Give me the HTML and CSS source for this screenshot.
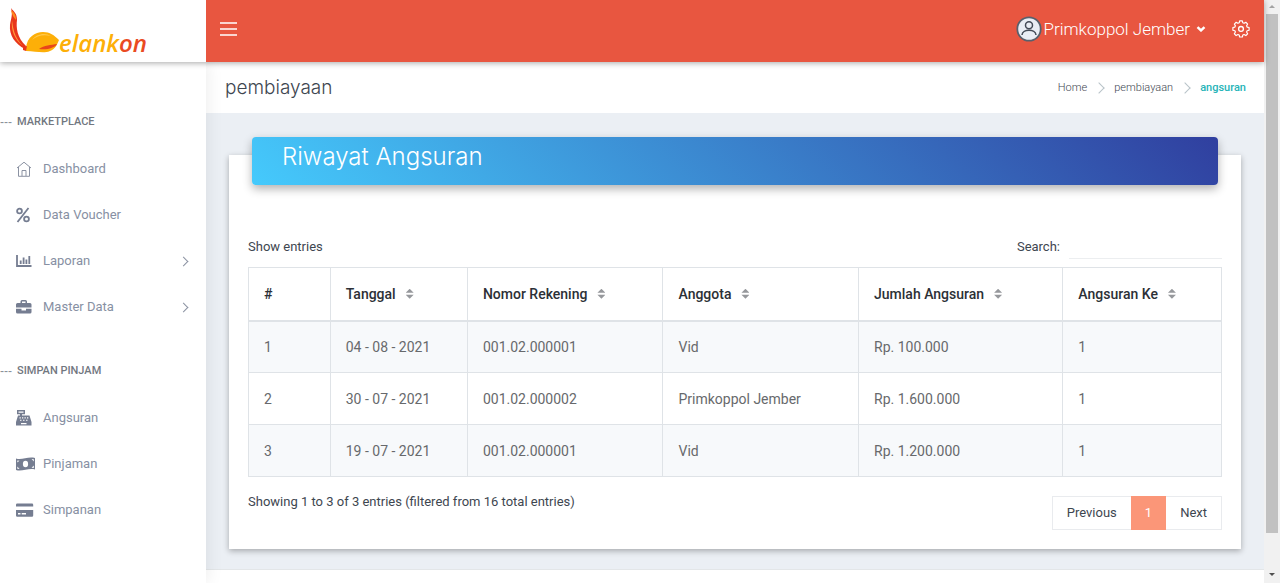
FILE: index.html
```html
<!DOCTYPE html>
<html lang="id">
  <head>
    <meta charset="utf-8" />
    <meta name="viewport" content="width=device-width, initial-scale=1" />
    <title>Belankon - Riwayat Angsuran</title>
    <link rel="stylesheet" href="styles.css" />
  </head>

  <body>
    <div class="page">
      <header class="topbar">
        <a class="brand" href="#" aria-label="Belankon">
          <svg class="brand-mark" width="50" height="47" viewBox="0 0 50 47">
            <path d="M2 0 C5 4 8 5 8 12 C7 19 8 30 17 38 L16 41 C6 36 0 27 1 17 C2 10 4 7 2 0Z" fill="#e8361b" />
            <path d="M2 2 C6 5 7 8 7 12 C5 10 3 7 2 2Z" fill="#ff8a1c" />
            <path d="M3 12 C4 20 5 29 14 38 C5 31 2 22 3 12Z" fill="#ff9c3c" />
            <path d="M17 40 C18 29 26 24 34 24 C41 24 45 27 50 32 C48 37 46 41 41 43 C34 46 27 43 17 43Z" fill="#fdaf08" />
            <path d="M23 32 C27 26 36 24 42 28 C34 26 28 28 23 32Z" fill="#ffc94d" />
            <path d="M30 41 C35 37 42 37 48 36 C46 40 38 42 30 41Z" fill="#e8461b" />
            <path d="M14 39 L18 38 L17 43 L14 42Z" fill="#e8361b" />
          </svg>
          <span class="brand-text">elank<span>on</span></span>
        </a>
        <div class="topbar-nav">
          <button class="icon-btn" aria-label="Menu">
            <svg width="17" height="14" viewBox="0 0 17 14"><path d="M0 1h17M0 7h17M0 13h17" /></svg>
          </button>
          <button class="user-btn">
            <svg width="26" height="26" viewBox="0 0 26 26">
              <circle cx="13" cy="13" r="11.7" fill="#e9edf5" stroke="#59606c" stroke-width="1.8" />
              <circle cx="13" cy="9.3" r="3.5" fill="none" stroke="#444b58" stroke-width="1.5" />
              <path d="M6 19 C6.500 12.800 19.500 12.800 20 19" fill="none" stroke="#444b58" stroke-width="1.5" />
            </svg>
            <span>Primkoppol Jember</span>
            <svg class="caret" width="10" height="6" viewBox="0 0 10 6"><path d="M1.500 1.200 L5 4.400 L8.500 1.200" /></svg>
          </button>
          <button class="icon-btn" aria-label="Settings">
            <svg width="18" height="18" viewBox="0 0 18 18">
              <path stroke-width="1.3" stroke-linejoin="round" d="M7.500 1h3l.5 2.200 1.400.6 2-1.200 2 2-1.200 2 .6 1.400 2.200.5v3l-2.200.5-.6 1.400 1.200 2-2 2-2-1.200-1.400.6-.5 2.200h-3L7 16.800l-1.400-.6-2 1.200-2-2 1.200-2L2.200 12 0 11.500v-3L2.200 8l.6-1.400-1.200-2 2-2 2 1.200L7 3.200Z" transform="translate(.9 -.1) scale(.9)" />
              <circle cx="9" cy="8.900" r="2.400" stroke-width="1.300" />
            </svg>
          </button>
        </div>
      </header>

      <div class="wrapper">
        <nav class="sidebar">
          <h3><span>---</span><b>MARKETPLACE</b></h3>
          <ul>
            <li><a href="#">
              <svg viewBox="0 0 20 16"><path class="line" d="M1 7 L8 1.200 L15 7 M2.500 6 V15.300 H13.500 V6 M6 15 V9.500 H10 V15" /></svg>
              <span>Dashboard</span>
            </a></li>
            <li><a href="#">
              <svg viewBox="0 0 20 16"><path class="bold" d="M12.500 1 L1.500 15" /><circle class="bold" cx="3.500" cy="4" r="2.400" /><circle class="bold" cx="10.500" cy="12" r="2.400" /></svg>
              <span>Data Voucher</span>
            </a></li>
            <li><a href="#">
              <svg viewBox="0 0 20 16"><path class="bold" d="M1 2 V13 H15.500" /><path class="bold" d="M4.700 7.500 V11 M7.600 4.500 V11 M10.400 6.500 V11 M13.300 3 V11" /></svg>
              <span>Laporan</span>
              <i class="arrow"></i>
            </a></li>
            <li><a href="#">
              <svg viewBox="0 0 20 16"><path d="M1.500 4 H4.500 V2.500 Q4.500 1 6 1 H9.500 Q11 1 11 2.500 V4 H14 Q15.500 4 15.500 5.500 V8.500 H0 V5.500 Q0 4 1.500 4Z M6 4 H9.500 V2.500 H6Z M0 9.700 H5.500 V11.500 H10 V9.700 H15.500 V13 Q15.500 14.500 14 14.500 H1.500 Q0 14.500 0 13Z" fill-rule="evenodd" /></svg>
              <span>Master Data</span>
              <i class="arrow"></i>
            </a></li>
          </ul>

          <h3><span>---</span><b>SIMPAN PINJAM</b></h3>
          <ul>
            <li><a href="#">
              <svg viewBox="0 0 20 16"><path d="M1 0H9V4.200H6V5.500H13.500L15.500 12V15.500H0V12L2 5.500H4V4.200H1Z M2.500 1.500V2.700H7.500V1.500Z M3.500 7.200V8.400H4.800V7.200Z M6 7.200V8.400H7.300V7.200Z M8.500 7.200V8.400H9.800V7.200Z M11 7.200V8.400H12.300V7.200Z M4 9.700V10.800H5.500V9.700Z M7 9.700V10.800H8.500V9.700Z M10 9.700V10.800H11.500V9.700Z M5 13V14.200H10.500V13Z" fill-rule="evenodd" /></svg>
              <span>Angsuran</span>
            </a></li>
            <li><a href="#">
              <svg viewBox="0 0 20 16"><path d="M0 2.500C6 4.500 12 0 19 2V13.500C13 11.500 6 16 0 14Z" /><ellipse cx="9.500" cy="8" rx="2.600" ry="3.300" fill="#fff" /><path fill="#fff" d="M1.300 4.500L3.500 4.700L1.300 6.500Z M1.300 10.500L3.600 13L1.300 12.800Z M15.600 3L17.800 3.200V5.500Z M17.800 9.500V12L15.600 11.700Z" /></svg>
              <span>Pinjaman</span>
            </a></li>
            <li><a href="#">
              <svg viewBox="0 0 20 16"><path d="M1.200 1.500H16Q17.200 1.500 17.200 2.700V4.500H0V2.700Q0 1.500 1.200 1.500Z M0 8H17.200V13.500Q17.200 14.700 16 14.700H1.200Q0 14.700 0 13.500Z M2 11V12.500H4.500V11Z M5.700 11V12.500H10V11Z" fill-rule="evenodd" /></svg>
              <span>Simpanan</span>
            </a></li>
          </ul>
        </nav>

        <div class="main">
          <div class="titlebar">
            <h1>pembiayaan</h1>
            <ol class="breadcrumb">
              <li><a href="#">Home</a></li>
              <li><a href="#">pembiayaan</a></li>
              <li class="active">angsuran</li>
            </ol>
          </div>

          <main class="content">
            <section class="card">
              <div class="card-header">
                <h2>Riwayat Angsuran</h2>
              </div>

              <div class="table-tools">
                <span>Show entries</span>
                <div class="search">
                  <label for="search">Search:</label>
                  <input type="search" id="search" />
                </div>
              </div>

              <table>
                <colgroup>
                  <col class="col-no" />
                  <col class="col-date" />
                  <col class="col-account" />
                  <col class="col-member" />
                  <col class="col-total" />
                  <col />
                </colgroup>
                <thead>
                  <tr>
                    <th>#</th>
                    <th class="sort">Tanggal</th>
                    <th class="sort">Nomor Rekening</th>
                    <th class="sort">Anggota</th>
                    <th class="sort">Jumlah Angsuran</th>
                    <th class="sort">Angsuran Ke</th>
                  </tr>
                </thead>
                <tbody>
                  <tr>
                    <td>1</td>
                    <td>04 - 08 - 2021</td>
                    <td>001.02.000001</td>
                    <td>Vid</td>
                    <td>Rp. 100.000</td>
                    <td>1</td>
                  </tr>
                  <tr>
                    <td>2</td>
                    <td>30 - 07 - 2021</td>
                    <td>001.02.000002</td>
                    <td>Primkoppol Jember</td>
                    <td>Rp. 1.600.000</td>
                    <td>1</td>
                  </tr>
                  <tr>
                    <td>3</td>
                    <td>19 - 07 - 2021</td>
                    <td>001.02.000001</td>
                    <td>Vid</td>
                    <td>Rp. 1.200.000</td>
                    <td>1</td>
                  </tr>
                </tbody>
              </table>

              <div class="table-footer">
                <span>Showing 1 to 3 of 3 entries (filtered from 16 total entries)</span>
                <div class="pagination">
                  <a href="#">Previous</a>
                  <a href="#" class="current">1</a>
                  <a href="#">Next</a>
                </div>
              </div>
            </section>
          </main>

          <footer></footer>
        </div>
      </div>
    </div>

    <div class="scrollbar">
      <span class="scroll-up"></span>
      <span class="scroll-thumb"></span>
      <span class="scroll-down"></span>
    </div>
  </body>
</html>
```
FILE: styles.css
```css
* {
  box-sizing: border-box;
}

body {
  margin: 0;
  display: flex;
  min-height: 100vh;
  font-family: Roboto, "Liberation Sans", sans-serif;
  font-size: 13px;
  line-height: 20px;
  color: #3e4650;
  background: #fff;
}

h1,
h2,
h3,
ul,
ol {
  margin: 0;
  padding: 0;
  list-style: none;
  font-weight: 400;
}

a {
  color: inherit;
  text-decoration: none;
}

button {
  display: flex;
  align-items: center;
  border: 0;
  padding: 0;
  background: none;
  color: inherit;
  font: inherit;
}

.page {
  flex: 1;
  min-width: 0;
  display: flex;
  flex-direction: column;
}

.topbar {
  display: flex;
  height: 62px;
  flex-shrink: 0;
  position: relative;
  z-index: 2;
  box-shadow: 0 1px 6px rgba(0, 0, 0, 0.35);
}

.brand {
  width: 206px;
  display: flex;
  padding: 8px 0 0 9px;
  background: #fff;
}

.brand-text {
  margin-top: 22px;
  font: italic 600 24px/26px "Open Sans", sans-serif;
  color: #fdaf08;

  & span {
    color: #ea4a22;
  }
}

.topbar-nav {
  flex: 1;
  display: flex;
  align-items: center;
  padding: 0 14px 5px;
  background: #e85640;
  color: #fff;
}

.icon-btn svg,
.caret {
  fill: none;
  stroke: #fff;
  stroke-width: 1.5;
}

.user-btn {
  margin-left: auto;
  margin-right: 26px;
  gap: 2px;
  font-size: 17px;
  font-weight: 300;

  & .caret {
    margin-left: 4px;
    stroke-width: 2.5;
  }
}

.wrapper {
  flex: 1;
  display: flex;
}

.sidebar {
  width: 206px;
  flex-shrink: 0;
  padding-top: 50px;
  position: relative;
  z-index: 1;
  box-shadow: 1px 0 16px rgba(0, 0, 0, 0.08);
  color: #8790a3;
  background: #fff;

  & h3 {
    display: flex;
    gap: 5px;
    font-size: 12px;
    color: #8a8f98;
  }

  & h3 span {
    font-family: "Liberation Sans", sans-serif;
  }

  & h3 b {
    font-size: 11px;
    font-weight: 500;
    color: #72777f;
  }

  & ul {
    padding: 14px 0 31px;
  }

  & ul:last-child {
    padding-bottom: 0;
  }

  & li a {
    display: flex;
    align-items: center;
    height: 46px;
    padding: 0 16px;
    gap: 7px;
  }

  & svg {
    width: 20px;
    height: 16px;
    fill: #757d91;
  }

  & .line {
    fill: none;
    stroke: #8b92a2;
  }

  & .bold {
    fill: none;
    stroke: #757d91;
    stroke-width: 1.8;
  }

  & .arrow {
    width: 7px;
    height: 7px;
    margin-left: auto;
    margin-right: 3px;
    border-top: 1px solid #8b92a2;
    border-right: 1px solid #8b92a2;
    transform: rotate(45deg);
  }
}

.main {
  flex: 1;
  min-width: 0;
  display: flex;
  flex-direction: column;
}

.titlebar {
  display: flex;
  align-items: center;
  justify-content: space-between;
  height: 51px;
  padding: 0 18px 0 19px;

  & h1 {
    font: 300 19px/24px Inter, sans-serif;
  }
}

.breadcrumb {
  display: flex;
  font-size: 11px;
  font-weight: 300;

  & li {
    display: flex;
    align-items: center;
  }

  & li + li::before {
    content: "";
    width: 7px;
    height: 7px;
    margin: 0 11px 0 8px;
    border-top: 1px solid #b8c3c8;
    border-right: 1px solid #b8c3c8;
    transform: rotate(45deg);
  }

  & .active {
    font-weight: 500;
    color: #26b4b8;
  }
}

.content {
  padding: 42px 23px 20px;
  background: #ebeff4;
}

.card {
  padding: 0 19px 19px;
  background: #fff;
  box-shadow: 0 2px 6px rgba(0, 0, 0, 0.3);
}

.card-header {
  position: relative;
  top: -18px;
  height: 48px;
  margin: 0 4px;
  padding: 6px 30px;
  border-radius: 4px;
  background: linear-gradient(45deg, #45cafc, #303f9f);
  box-shadow: 0 4px 10px rgba(0, 0, 0, 0.3);
  color: #fff;

  & h2 {
    font: 300 24px/28px Inter, sans-serif;
  }
}

.table-tools {
  display: flex;
  justify-content: space-between;
  align-items: center;
  margin: 32px 0 8px;
}

.search {
  display: flex;
  align-items: center;
  gap: 9px;

  & input {
    width: 153px;
    height: 24px;
    border: 0;
    border-bottom: 1px solid #eceef0;
    background: none;
    font: inherit;
  }
}

table {
  width: 100%;
  table-layout: fixed;
  border-collapse: collapse;
  font-size: 14px;
  color: #67696c;

  & th,
  & td {
    height: 52px;
    padding: 0 15px;
    border: 1px solid #dfe3e7;
    text-align: left;
  }

  & th {
    height: 53px;
    border-bottom-width: 2px;
    font-weight: 500;
    color: #2c3036;
  }

  & tbody tr:nth-child(odd) {
    background: #f7f9fb;
  }
}

.col-no {
  width: 8.4%;
}

.col-date {
  width: 14.1%;
}

.col-account,
.col-member {
  width: 20.1%;
}

.col-total {
  width: 21%;
}

.sort::after {
  content: "";
  display: inline-block;
  width: 8px;
  height: 10px;
  margin-left: 10px;
  background: #96989c;
  clip-path: polygon(50% 0, 100% 40%, 0 40%, 0 60%, 100% 60%, 50% 100%, 0 60%, 0 40%);
}

.table-footer {
  display: flex;
  justify-content: space-between;
  padding-top: 15px;
}

.pagination {
  display: flex;
  margin-top: 4px;
  border: 1px solid #e9ebee;

  & a {
    padding: 6px 14px;
  }

  & .current {
    margin: -1px 0;
    padding: 7px 14px;
    background: #fb9678;
    color: #fff;
  }
}

footer {
  flex: 1;
  border-top: 1px solid #e3e6e8;
}

.scrollbar {
  width: 16px;
  display: flex;
  flex-direction: column;
  align-items: center;
  background: #f1f1f1;
}

.scroll-up,
.scroll-down {
  width: 6px;
  height: 3px;
  margin: 5px 0 6px;
  background: #a3a3a3;
  clip-path: polygon(50% 0, 100% 100%, 0 100%);
}

.scroll-thumb {
  width: 12px;
  flex: 1;
  background: #c1c1c1;
}

.scroll-down {
  margin: 40px 0 7px;
  background: #505050;
  clip-path: polygon(0 0, 100% 0, 50% 100%);
}
```
